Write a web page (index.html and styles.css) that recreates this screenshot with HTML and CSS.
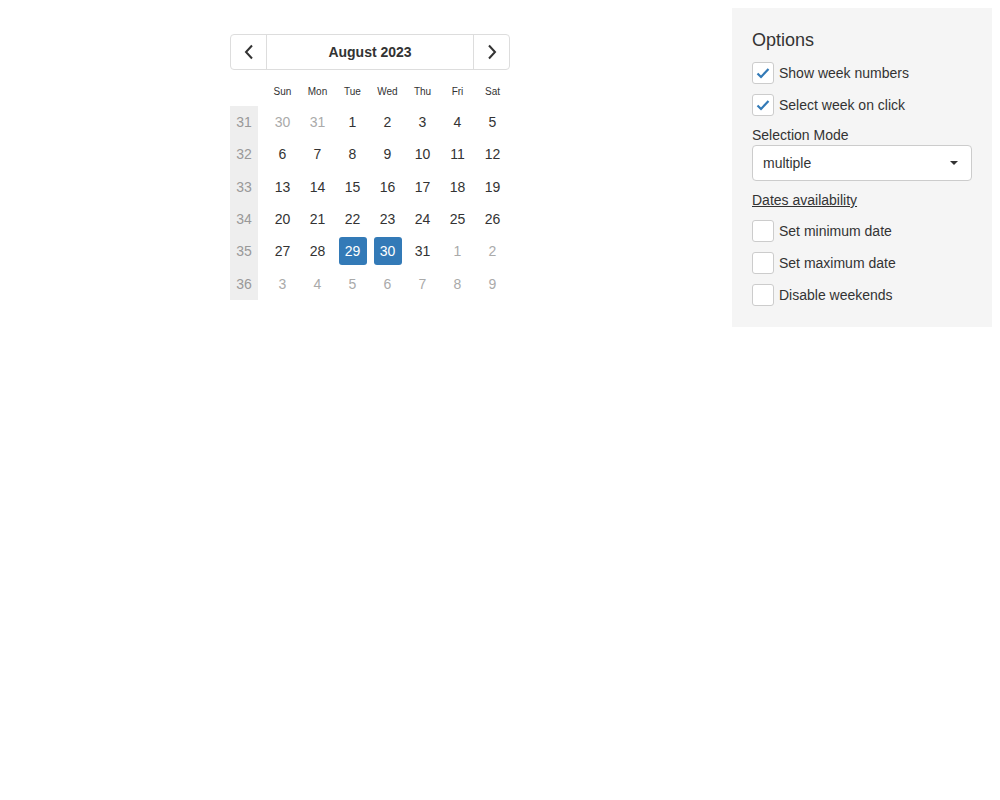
FILE: index.html
```html
<!DOCTYPE html>
<html>
<head>
<meta charset="utf-8">
<link rel="stylesheet" href="styles.css">
</head>
<body>
<div class="page">
  <div class="cal">
    <div class="cal-head">
      <button class="nav"><svg width="10" height="16" viewBox="0 0 10 16"><path d="M8 1.5 L2 8 L8 14.5" fill="none" stroke="#333" stroke-width="2"/></svg></button>
      <div class="title">August 2023</div>
      <button class="nav"><svg width="10" height="16" viewBox="0 0 10 16"><path d="M2 1.5 L8 8 L2 14.5" fill="none" stroke="#333" stroke-width="2"/></svg></button>
    </div>
    <div class="grid">
      <div class="wk-col">
        <div class="wk">31</div><div class="wk">32</div><div class="wk">33</div><div class="wk">34</div><div class="wk">35</div><div class="wk">36</div>
      </div>
      <div class="days">
        <div class="dow">Sun</div><div class="dow">Mon</div><div class="dow">Tue</div><div class="dow">Wed</div><div class="dow">Thu</div><div class="dow">Fri</div><div class="dow">Sat</div>
        <div class="d muted">30</div><div class="d muted">31</div><div class="d">1</div><div class="d">2</div><div class="d">3</div><div class="d">4</div><div class="d">5</div>
        <div class="d">6</div><div class="d">7</div><div class="d">8</div><div class="d">9</div><div class="d">10</div><div class="d">11</div><div class="d">12</div>
        <div class="d">13</div><div class="d">14</div><div class="d">15</div><div class="d">16</div><div class="d">17</div><div class="d">18</div><div class="d">19</div>
        <div class="d">20</div><div class="d">21</div><div class="d">22</div><div class="d">23</div><div class="d">24</div><div class="d">25</div><div class="d">26</div>
        <div class="d">27</div><div class="d">28</div><div class="d"><span class="sel">29</span></div><div class="d"><span class="sel">30</span></div><div class="d">31</div><div class="d muted">1</div><div class="d muted">2</div>
        <div class="d muted">3</div><div class="d muted">4</div><div class="d muted">5</div><div class="d muted">6</div><div class="d muted">7</div><div class="d muted">8</div><div class="d muted">9</div>
      </div>
    </div>
  </div>

  <div class="options">
    <h2 class="opt-title">Options</h2>
    <label class="chk"><span class="box"><svg width="16" height="16" viewBox="0 0 16 16"><path d="M2.5 8.5 L6 12 L13.5 4" fill="none" stroke="#337ab7" stroke-width="2.2"/></svg></span>Show week numbers</label>
    <label class="chk"><span class="box"><svg width="16" height="16" viewBox="0 0 16 16"><path d="M2.5 8.5 L6 12 L13.5 4" fill="none" stroke="#337ab7" stroke-width="2.2"/></svg></span>Select week on click</label>
    <div class="field-label">Selection Mode</div>
    <div class="select"><span>multiple</span><span class="caret"></span></div>
    <div class="link">Dates availability</div>
    <label class="chk"><span class="box"></span>Set minimum date</label>
    <label class="chk"><span class="box"></span>Set maximum date</label>
    <label class="chk"><span class="box"></span>Disable weekends</label>
  </div>
</div>
</body>
</html>
```
FILE: styles.css
```css
* { box-sizing: border-box; }
body {
  margin: 8px;
  font-family: "Liberation Sans", Arial, sans-serif;
  color: #333;
  background: #fff;
}
.page {
  display: flex;
  align-items: flex-start;
}
.cal {
  width: 280px;
  margin-left: 222px;
  margin-top: 26px;
}
.cal-head {
  display: flex;
  height: 36px;
  border: 1px solid #ddd;
  border-radius: 4px;
}
.nav {
  width: 36px;
  height: 34px;
  border: none;
  background: transparent;
  padding: 0;
  display: flex;
  align-items: center;
  justify-content: center;
}
.nav:first-child { border-right: 1px solid #ddd; }
.nav:last-child { border-left: 1px solid #ddd; }
.title {
  flex: 1;
  text-align: center;
  font-weight: bold;
  font-size: 14px;
  line-height: 34px;
  color: #333;
}
.grid {
  display: flex;
  margin-top: 16px;
}
.wk-col {
  width: 28px;
  padding-top: 20px;
  margin-right: 7px;
}
.wk {
  height: 32.33px;
  line-height: 32px;
  background: #eee;
  color: #999;
  font-size: 14px;
  text-align: center;
}
.days {
  flex: 1;
  display: grid;
  grid-template-columns: repeat(7, 35px);
  grid-auto-rows: 32.33px;
  grid-template-rows: 20px;
}
.dow {
  font-size: 10px;
  text-align: center;
  line-height: 12px;
  color: #333;
}
.d {
  font-size: 14px;
  text-align: center;
  line-height: 32px;
  color: #333;
  display: flex;
  align-items: center;
  justify-content: center;
}
.d.muted { color: #aaa; }
.sel {
  display: block;
  width: 28px;
  height: 28px;
  line-height: 28px;
  background: #337ab7;
  color: #fff;
  border-radius: 3px;
}
.options {
  margin-left: auto;
  width: 260px;
  background: #f5f5f5;
  padding: 20px 20px 21px 20px;
  font-size: 14px;
}
.opt-title {
  margin: 0 0 10px;
  font-size: 18px;
  font-weight: normal;
  line-height: 24px;
  color: #333;
}
.chk {
  display: flex;
  align-items: center;
  height: 22px;
  margin-bottom: 10px;
  font-size: 14px;
  color: #333;
}
.box {
  width: 22px;
  height: 22px;
  background: #fff;
  border: 1px solid #ccc;
  border-radius: 3px;
  margin-right: 5px;
  display: flex;
  align-items: center;
  justify-content: center;
}
.field-label {
  margin-top: 9px;
  line-height: 18px;
}
.select {
  margin-top: 1px;
  height: 36px;
  background: #fff;
  border: 1px solid #ccc;
  border-radius: 4px;
  display: flex;
  align-items: center;
  justify-content: space-between;
  padding: 0 13px 0 10px;
  color: #333;
}
.caret {
  width: 0;
  height: 0;
  border-left: 4px solid transparent;
  border-right: 4px solid transparent;
  border-top: 4px solid #333;
}
.link {
  margin-top: 10px;
  text-decoration: underline;
  line-height: 18px;
  margin-bottom: 11px;
}
.options .chk:last-child { margin-bottom: 0; }
```
